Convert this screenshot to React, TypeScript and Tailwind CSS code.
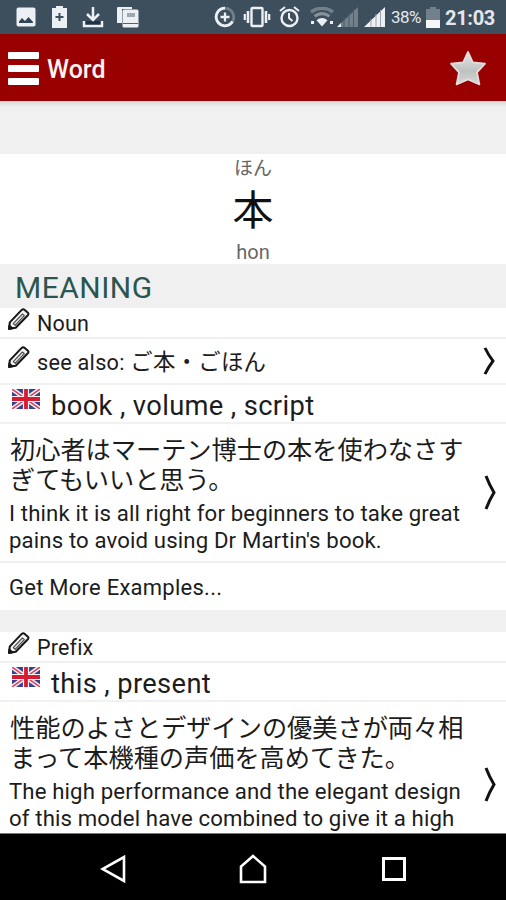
import React from 'react';

interface Entry {
  type: string;
  seeAlso?: string;
  meanings: string;
  japanese: string[];
  english: string[];
  hasMore?: boolean;
}

const entries: Entry[] = [
  {
    type: 'Noun',
    seeAlso: 'ご本・ごほん',
    meanings: 'book , volume , script',
    japanese: ['初心者はマーテン博士の本を使わなさす', 'ぎてもいいと思う。'],
    english: ['I think it is all right for beginners to take great', "pains to avoid using Dr Martin's book."],
    hasMore: true,
  },
  {
    type: 'Prefix',
    meanings: 'this , present',
    japanese: ['性能のよさとデザインの優美さが両々相', 'まって本機種の声価を高めてきた。'],
    english: ['The high performance and the elegant design', 'of this model have combined to give it a high'],
  },
];

const Pencil = () => (
  <svg className="w-6 h-[23px] shrink-0" viewBox="0 0 24 24" fill="none" stroke="#151515" strokeWidth="2.1" strokeLinejoin="round">
    <path d="M1.6 21.6 2.4 15 14.8 2Q16.4 .6 18 2L21 4.6Q22.6 6 21.2 7.6L8.6 20.6Z" fill="#f4f4f4" />
    <path d="M6 16.4 15.6 6.2 17.6 8 8 18.2Z" strokeWidth="1.1" stroke="#444" fill="#ddd" />
    <path d="M1.6 21.8 2 18.6 5 21.2Z" fill="#151515" />
  </svg>
);

const Flag = () => (
  <svg className="w-7 h-5 shrink-0" viewBox="0 0 28 20">
    <rect width="28" height="20" fill="#35408f" />
    <path d="M0 0 28 20M28 0 0 20" stroke="#f4eef2" strokeWidth="4.6" />
    <path d="M0 0 28 20M28 0 0 20" stroke="#d8465a" strokeWidth="1.5" />
    <path d="M14 0V20M0 10H28" stroke="#f8f0f2" strokeWidth="6.2" />
    <path d="M14 0V20M0 10H28" stroke="#d61c32" strokeWidth="3.8" />
  </svg>
);

const Chevron = ({ small }: { small?: boolean }) => (
  <svg className={small ? 'w-3 h-7 shrink-0' : 'w-3 h-[35px] shrink-0'} viewBox="0 0 12 35" preserveAspectRatio="none" fill="none" stroke="#111" strokeWidth="3">
    <path d="M2 1Q5.4 10 10 17.5Q5.4 25 2 34" />
  </svg>
);

const StatusBar = () => (
  <div className="h-[34px] shrink-0 bg-[#3d4f5d] flex items-center text-[#e4e8ec]">
    <svg className="w-5 h-5 ml-4" viewBox="0 0 20 20">
      <rect x=".5" y=".5" width="19" height="19" rx="2" fill="#eceff3" />
      <path d="M3 16V14.5L6 11 9 14 12.5 10 17 15V16Z" fill="#2f4454" />
    </svg>
    <svg className="w-[17px] h-6 ml-[15px]" viewBox="0 0 17 24">
      <path d="M5 1H12V3H16V23H1V3H5Z" fill="#eceff3" />
      <path d="M8.5 8V16M4.5 12H12.5" stroke="#3d4f5d" strokeWidth="2" />
    </svg>
    <svg className="w-[22px] h-[22px] ml-[14px]" viewBox="0 0 22 22" fill="none" stroke="#eceff3" strokeWidth="2.5">
      <path d="M3 15H19V19H3Z" fill="#1f3345" stroke="none" />
      <path d="M11 1V13M5 8 11 14 17 8M2 15V20H20V15" />
    </svg>
    <svg className="w-[23px] h-[22px] ml-[12px]" viewBox="0 0 23 22">
      <path d="M1 17V2Q1 1 2 1H16V3H6V17Z" fill="#eceff3" />
      <rect x="6.5" y="3.5" width="16" height="18" rx="1.5" fill="#eceff3" />
      <path d="M11 8H19M11 10H19M7 17.5H22" stroke="#52616e" strokeWidth="1.2" />
    </svg>
    <svg className="w-[22px] h-[22px] ml-[75px]" viewBox="0 0 22 22" fill="none" stroke="#eceff3" strokeWidth="2.8">
      <circle cx="11" cy="11" r="8.8" stroke="#71808b" />
      <path d="M11 2.2A8.8 8.8 0 1 0 18.5 15.6" />
      <path d="M11 6.5V15.5M6.5 11H15.5" strokeWidth="2.3" />
    </svg>
    <svg className="w-[28px] h-[22px] ml-[7px]" viewBox="0 0 28 22" fill="none" stroke="#eceff3">
      <rect x="8.5" y="2" width="11" height="18" rx="1" strokeWidth="2.4" />
      <path d="M5 5V17M23 5V17" strokeWidth="2.6" />
      <path d="M1.8 8V14M26.2 8V14" strokeWidth="2.2" />
    </svg>
    <svg className="w-[21px] h-[22px] ml-[8px]" viewBox="0 0 21 22" fill="none" stroke="#eceff3" strokeWidth="2.4">
      <circle cx="10.5" cy="12" r="8" />
      <path d="M10 7V12L13.5 15M1 5 6 1M20 5 15 1" strokeWidth="2" />
    </svg>
    <svg className="w-[24px] h-[20px] ml-[10px]" viewBox="0 0 24 20" fill="none">
      <path d="M1 5Q12-2.5 23 5" stroke="#71808b" strokeWidth="3.4" />
      <path d="M4.6 9.3Q12 4 19.4 9.3" stroke="#87949e" strokeWidth="3" />
      <path d="M6.5 13.2Q12 8.6 17.5 13.2L12 19.4Z" fill="#eceff3" />
      <path d="M1 15.5H4M20 15.5H23" stroke="#eceff3" strokeWidth="3" />
    </svg>
    <svg className="w-[21px] h-[20px] ml-[3px]" viewBox="0 0 21 20">
      <path d="M0 20 21 0V20Z" fill="#71808b" />
      <path d="M7 11V20M12 6V20M16.5 2V20" stroke="#4d5e6b" />
      <path d="M0 20 4 16V20Z" fill="#eceff3" />
    </svg>
    <svg className="w-[21px] h-[20px] ml-[6px]" viewBox="0 0 21 20">
      <path d="M0 20 21 0V20Z" fill="#eceff3" />
      <path d="M7 12V20M12 7V20M16.5 3V20" stroke="#9aa5ad" />
    </svg>
    <span className="ml-[6px] w-[32px] pt-px whitespace-nowrap text-[17px] leading-none tracking-[-0.6px]">38%</span>
    <svg className="w-[14px] h-[21px] ml-[3px]" viewBox="0 0 14 21">
      <path d="M4 0H10V2H14V13H0V2H4Z" fill="#71808b" />
      <path d="M0 13H14V21H0Z" fill="#f4f6f8" />
    </svg>
    <span className="ml-[5px] pt-[2px] whitespace-nowrap text-[20px] leading-none font-bold tracking-[-0.3px]">21:03</span>
  </div>
);

const TypeRow = ({ label }: { label: string }) => (
  <div className="h-[31px] shrink-0 border-b-2 border-[#f1f1f1] flex items-start pl-[7px]">
    <Pencil />
    <span className="ml-[6px] pt-px text-[21.5px] leading-[30px] tracking-[0.15px]">{label}</span>
  </div>
);

const EntryBlock = ({ entry }: { entry: Entry }) => (
  <section className="shrink-0 bg-white">
    <TypeRow label={entry.type} />
    {entry.seeAlso && (
      <div className="h-[46px] border-b-2 border-[#f1f1f1] flex items-start pl-[7px] pr-[11px]">
        <div className="pt-[7px]"><Pencil /></div>
        <span className="ml-[6px] flex-1 text-[21.7px] leading-[46px] tracking-[0.25px] whitespace-nowrap">
          see also: <span className="text-[22.4px]">{entry.seeAlso}</span>
        </span>
        <div className="pt-2"><Chevron small /></div>
      </div>
    )}
    <div className="h-[39px] border-b-2 border-[#f1f1f1] flex items-start pl-3">
      <div className="pt-[4px]"><Flag /></div>
      <span className="ml-[11px] text-[27.3px] leading-[42px] tracking-[0.37px] whitespace-nowrap">{entry.meanings}</span>
    </div>
    <div className={`${entry.hasMore ? 'pb-[8px]' : 'pb-[35px]'} border-b-2 border-[#f1f1f1] pt-[12px] pl-[9px] pr-[10px] flex items-start justify-between`}>
      <div className="whitespace-nowrap">
        <p className="pl-px text-[25.2px] leading-[30px]">
          {entry.japanese.map(line => <span key={line} className="block">{line}</span>)}
        </p>
        <p className="mt-[4px] text-[22.2px] leading-[26.7px] tracking-[0.13px]">
          {entry.english.map(line => <span key={line} className="block">{line}</span>)}
        </p>
      </div>
      <div className={entry.hasMore ? 'pt-[39px]' : 'pt-[53px]'}><Chevron /></div>
    </div>
    {entry.hasMore && <div className="h-[47px] pl-[9px] text-[22px] leading-[49px] tracking-[0.25px]">Get More Examples...</div>}
  </section>
);

const App: React.FC = () => {
  return (
    <div className="w-[506px] h-[900px] flex flex-col overflow-hidden bg-[#f0f0f0] text-[#1c1c1c] font-[Roboto,'Noto_Sans_CJK_JP',sans-serif]">
      <StatusBar />

      <header className="h-[67px] shrink-0 bg-[#990000] flex items-center pl-2 pr-[19px] text-[#fbf3f3]">
        <div className="w-[31px] pt-[2px] flex flex-col gap-[6px]">
          <div className="h-[7px] rounded-[1px] bg-white" />
          <div className="h-[7px] rounded-[1px] bg-white" />
          <div className="h-[7px] rounded-[1px] bg-white" />
        </div>
        <h1 className="ml-2 pt-[3px] flex-1 text-[25px] font-medium leading-none">Word</h1>
        <svg className="w-[38px] h-9" viewBox="0 0 38 36">
          <defs>
            <linearGradient id="star" x1="0" y1="0" x2="0" y2="1">
              <stop offset="0" stopColor="#e6e6e6" />
              <stop offset=".6" stopColor="#bdc1c0" />
              <stop offset="1" stopColor="#d8d8d8" />
            </linearGradient>
          </defs>
          <path d="M19 2 23.8 12.4 36 13.6 28 22.4 30.4 34.4 19 29.4 7.6 34.4 10 22.4 2 13.6 14.2 12.4Z" fill="url(#star)" stroke="#e2dede" strokeWidth="1.8" strokeLinejoin="round" />
        </svg>
      </header>

      <main className="h-[732px] shrink-0 overflow-hidden flex flex-col">
        <div className="h-[53px] shrink-0 bg-linear-to-b from-[#d6d6d6] to-[#f0f0f0] to-[6px]" />
        <div className="h-[110px] shrink-0 bg-white flex flex-col items-center text-[#666]">
          <span className="pt-px text-[19px] leading-[28px]">ほん</span>
          <span className="pt-px text-[41px] leading-[55px] text-[#111]">本</span>
          <span className="text-[20px] leading-[27px]">hon</span>
        </div>
        <h2 className="h-[44px] shrink-0 pl-[15px] text-[30px] leading-[48px] tracking-[0.5px] text-[#2b5650]">MEANING</h2>
        <EntryBlock entry={entries[0]} />
        <div className="h-[22px] shrink-0" />
        <EntryBlock entry={entries[1]} />
      </main>

      <nav className="flex-1 bg-black border-t border-[#777] flex items-center pl-[100px] pt-[4px] text-white">
        <svg className="w-[26px] h-[28px]" viewBox="0 0 26 28" fill="none" stroke="currentColor" strokeWidth="2.6">
          <path d="M24 2V26L2.5 14Z" />
        </svg>
        <svg className="w-[30px] h-[30px] ml-[112px]" viewBox="0 0 30 30" fill="none" stroke="currentColor" strokeWidth="2.6">
          <path d="M3 28V12.5L15 2 27 12.5V28Z" />
        </svg>
        <svg className="w-[26px] h-[26px] ml-[113px]" viewBox="0 0 26 26" fill="none" stroke="currentColor" strokeWidth="3">
          <rect x="2.5" y="2.5" width="21" height="21" />
        </svg>
      </nav>
    </div>
  );
};

export default App;
